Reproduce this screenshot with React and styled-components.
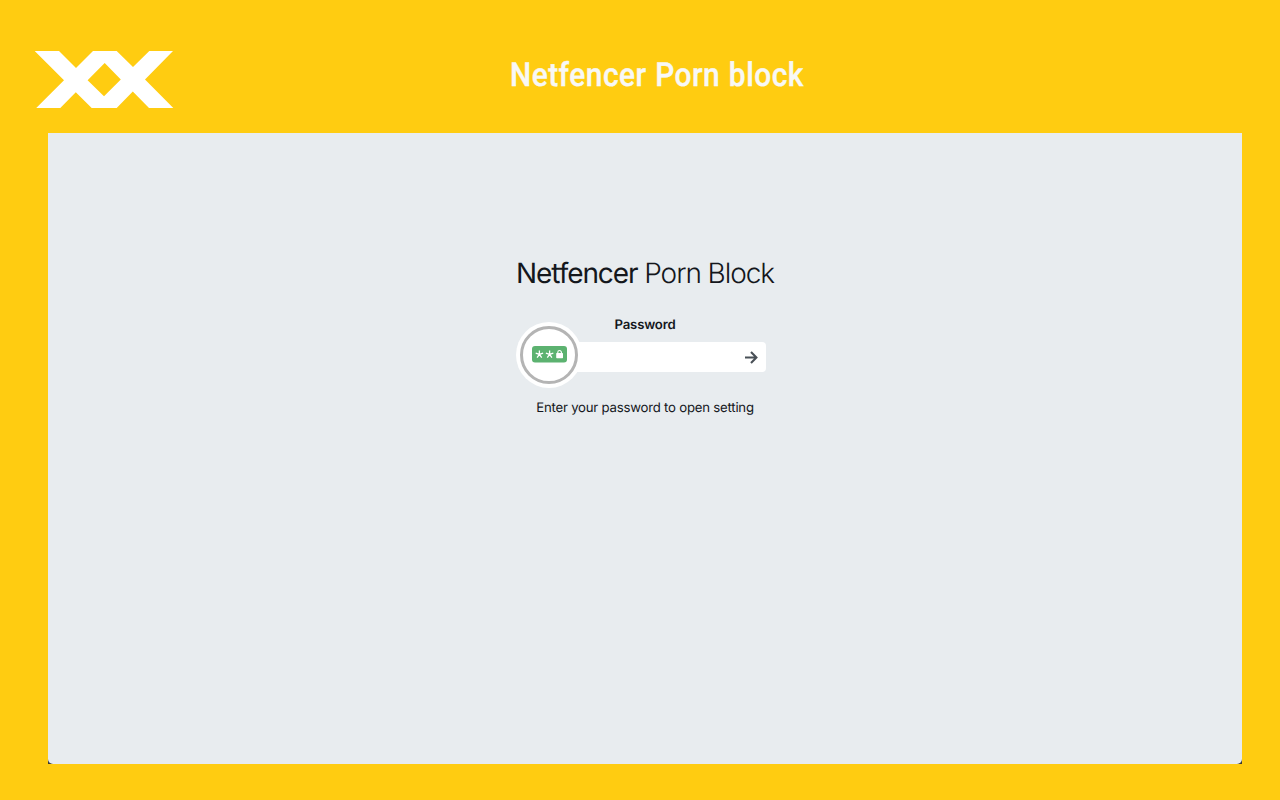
import React from "react";
import styled, { createGlobalStyle } from "styled-components";

const GlobalStyle = createGlobalStyle`
    * {
        box-sizing: border-box;
    }

    body {
        margin: 0;
        background: #ffcc11;
        font-family: Inter, "Liberation Sans", sans-serif;
        text-rendering: geometricPrecision;
    }
`;

const Page = styled.div`
    display: flex;
    flex-direction: column;
    width: 1280px;
    height: 800px;
    padding: 0 38px 36px 48px;
    background: #ffcc11;
    overflow: hidden;
`;

const Header = styled.header`
    display: grid;
    grid-template-columns: 476px 1fr;
    height: 133px;
    margin-left: -14px;
`;

const Logo = styled.svg`
    width: 140px;
    height: 58px;
    margin-top: 50px;
`;

const Title = styled.h1`
    margin: 56px 0 0;
    font-family: Roboto, sans-serif;
    font-size: 33px;
    font-weight: 500;
    line-height: 40px;
    letter-spacing: 0.55px;
    word-spacing: 0.8px;
    color: #f8f8f6;
    -webkit-text-stroke: 0.4px #f8f8f6;
    white-space: nowrap;
    transform: scaleX(0.905);
    transform-origin: left;
`;

const Window = styled.div`
    flex: 1;
    background: #3d3a32;
`;

const Screen = styled.main`
    display: flex;
    flex-direction: column;
    align-items: center;
    height: 100%;
    padding-top: 120px;
    background: #e8ecef;
    border-radius: 0 0 5px 5px;
    color: #14171c;
`;

const Brand = styled.div`
    height: 40px;
    font-size: 28px;
    font-weight: 300;
    line-height: 40px;
    letter-spacing: -1.08px;
    white-space: nowrap;

    b {
        font-weight: 400;
    }
`;

const Label = styled.label`
    margin-top: 22px;
    font-size: 13.2px;
    font-weight: 600;
    line-height: 20px;
    letter-spacing: -0.2px;
`;

const Credentials = styled.form`
    position: relative;
    display: flex;
    width: 241px;
    height: 30px;
    margin-top: 7px;
    background: #fff;
    border-radius: 4px;
`;

const PasswordInput = styled.input`
    flex: 1;
    min-width: 0;
    margin-left: 58px;
    padding: 0;
    border: 0;
    outline: 0;
    background: transparent;
    font: 13px Inter, sans-serif;
`;

const SubmitButton = styled.button`
    display: flex;
    align-items: center;
    justify-content: center;
    width: 30px;
    padding: 0;
    border: 0;
    background: transparent;

    svg {
        width: 14px;
        height: 14px;
    }
`;

// sits over the left end of the password field
const Avatar = styled.div`
    position: absolute;
    left: -8.5px;
    top: -20px;
    display: flex;
    width: 66px;
    height: 66px;
    padding: 4px;
    background: #fff;
    border-radius: 50%;
`;

const Ring = styled.div`
    display: flex;
    align-items: center;
    justify-content: center;
    flex: 1;
    padding: 0 0 1px 1px;
    border: 3px solid #b4b4b4;
    border-radius: 50%;

    svg {
        width: 35px;
        height: 17px;
    }
`;

const Help = styled.p`
    margin: 26px 0 0;
    font-size: 13.2px;
    line-height: 20px;
    letter-spacing: -0.22px;
    white-space: nowrap;
`;

function Star({ x }) {
    return (
        <path
            transform={`translate(${x} 8.4)`}
            d="M0 0V-3.9M0 0L3.7-1.2M0 0L2.3 3.2M0 0L-2.3 3.2M0 0L-3.7-1.2"
            stroke="#fff"
            strokeWidth="1.3"
        />
    );
}

function PasswordBadge() {
    return (
        <svg viewBox="0 0 35 17">
            <rect width="35" height="16.6" rx="3" fill="#5cb270" />
            <Star x={7.4} />
            <Star x={17.6} />
            <rect x="24.2" y="7" width="6.8" height="5.2" rx="0.6" fill="#fff" />
            <path d="M25.8 7.4V6.3a1.8 1.8 0 0 1 3.6 0v1.1" fill="none" stroke="#fff" strokeWidth="1.1" />
        </svg>
    );
}

function App() {
    return (
        <>
            <GlobalStyle />
            <Page>
                <Header>
                    <Logo viewBox="34 50 140 58">
                        <path
                            fill="#fff"
                            fillRule="evenodd"
                            d="M34.7 51H59L76 68L93 51H116.7L133 67L149.3 51H173L145 79.4L173.3 108H149L132.8 91.4L116.7 108H91.7L75.8 92.3L60.3 108H36.2L64 80.3ZM104.7 63L120.8 79.4L104 96.2L87.6 80.3Z"
                        />
                    </Logo>
                    <Title>Netfencer Porn block</Title>
                </Header>
                <Window>
                    <Screen>
                        <Brand>
                            <b>Netfencer</b> Porn Block
                        </Brand>
                        <Label htmlFor="password">Password</Label>
                        <Credentials>
                            <PasswordInput id="password" type="password" />
                            <SubmitButton type="button" aria-label="Open">
                                <svg viewBox="0 0 14 14" fill="none" stroke="#495057" strokeWidth="2.1">
                                    <path d="M1 7.5H12.2M7 2.1L12.4 7.5L7 12.9" />
                                </svg>
                            </SubmitButton>
                            <Avatar>
                                <Ring>
                                    <PasswordBadge />
                                </Ring>
                            </Avatar>
                        </Credentials>
                        <Help>Enter your password to open setting</Help>
                    </Screen>
                </Window>
            </Page>
        </>
    );
}

export default App;
